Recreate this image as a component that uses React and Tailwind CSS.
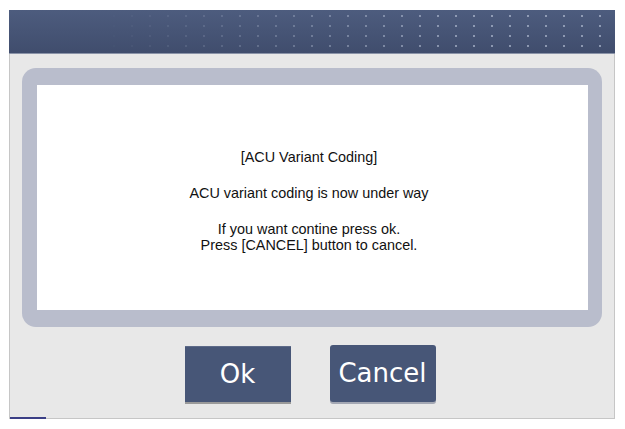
import React from 'react';

const App = () => {
  const lines = ['If you want contine press ok.', 'Press [CANCEL] button to cancel.'];

  return (
    <div className="w-[625px] h-[429px] bg-white pt-[10px] pl-[9px] font-['Liberation_Sans',Arial,sans-serif]">
      <div className="relative w-[606px] h-[409px] bg-[#e8e8e8] border-l border-r border-b border-[#c6c6c6] flex flex-col">
        {/* title bar */}
        <div className="relative h-[44px] -mx-px bg-gradient-to-b from-[#4d5c7e] to-[#404d6d] border-b border-[#8a93a8] overflow-hidden">
          <div className="absolute inset-0 bg-[radial-gradient(circle,rgba(190,200,220,0.6)_0.8px,transparent_1.4px)] bg-[length:18px_10px] bg-[position:6px_1px] [mask-image:linear-gradient(to_right,transparent_15%,black_75%)]" />
        </div>

        {/* message frame */}
        <div className="mt-[14px] ml-[12px] w-[580px] h-[259px] rounded-[14px] bg-[#b9bdcc] pt-[17px] pb-[17px] pl-[15px] pr-[14px]">
          <div className="w-full h-full bg-white flex flex-col items-center justify-center text-[14.4px] leading-[16px] text-[#111] pr-[7px] pt-[6px]">
            <p>[ACU Variant Coding]</p>
            <p className="mt-[20px]">ACU variant coding is now under way</p>
            <div className="mt-[20px] flex flex-col items-center">
              {lines.map((l) => (
                <p key={l}>{l}</p>
              ))}
            </div>
          </div>
        </div>

        {/* buttons */}
        <div className="mt-[19px] flex justify-center gap-[39px] pr-[4px] font-['DejaVu_Sans',sans-serif]">
          <button className="w-[106px] h-[56px] bg-[#475677] text-white text-[26px] shadow-[0_2px_0_#9a9a9a] border-t border-[#5d6a88]">
            Ok
          </button>
          <button className="w-[106px] h-[57px] -mt-px bg-[#475677] text-white text-[26px] rounded-[3px] shadow-[0_2px_0_#a4a8b4]">
            Cancel
          </button>
        </div>

        <div className="absolute left-0 -bottom-px w-[36px] h-[2px] bg-[#3b3f86]" />
      </div>
    </div>
  );
};

export default App;
